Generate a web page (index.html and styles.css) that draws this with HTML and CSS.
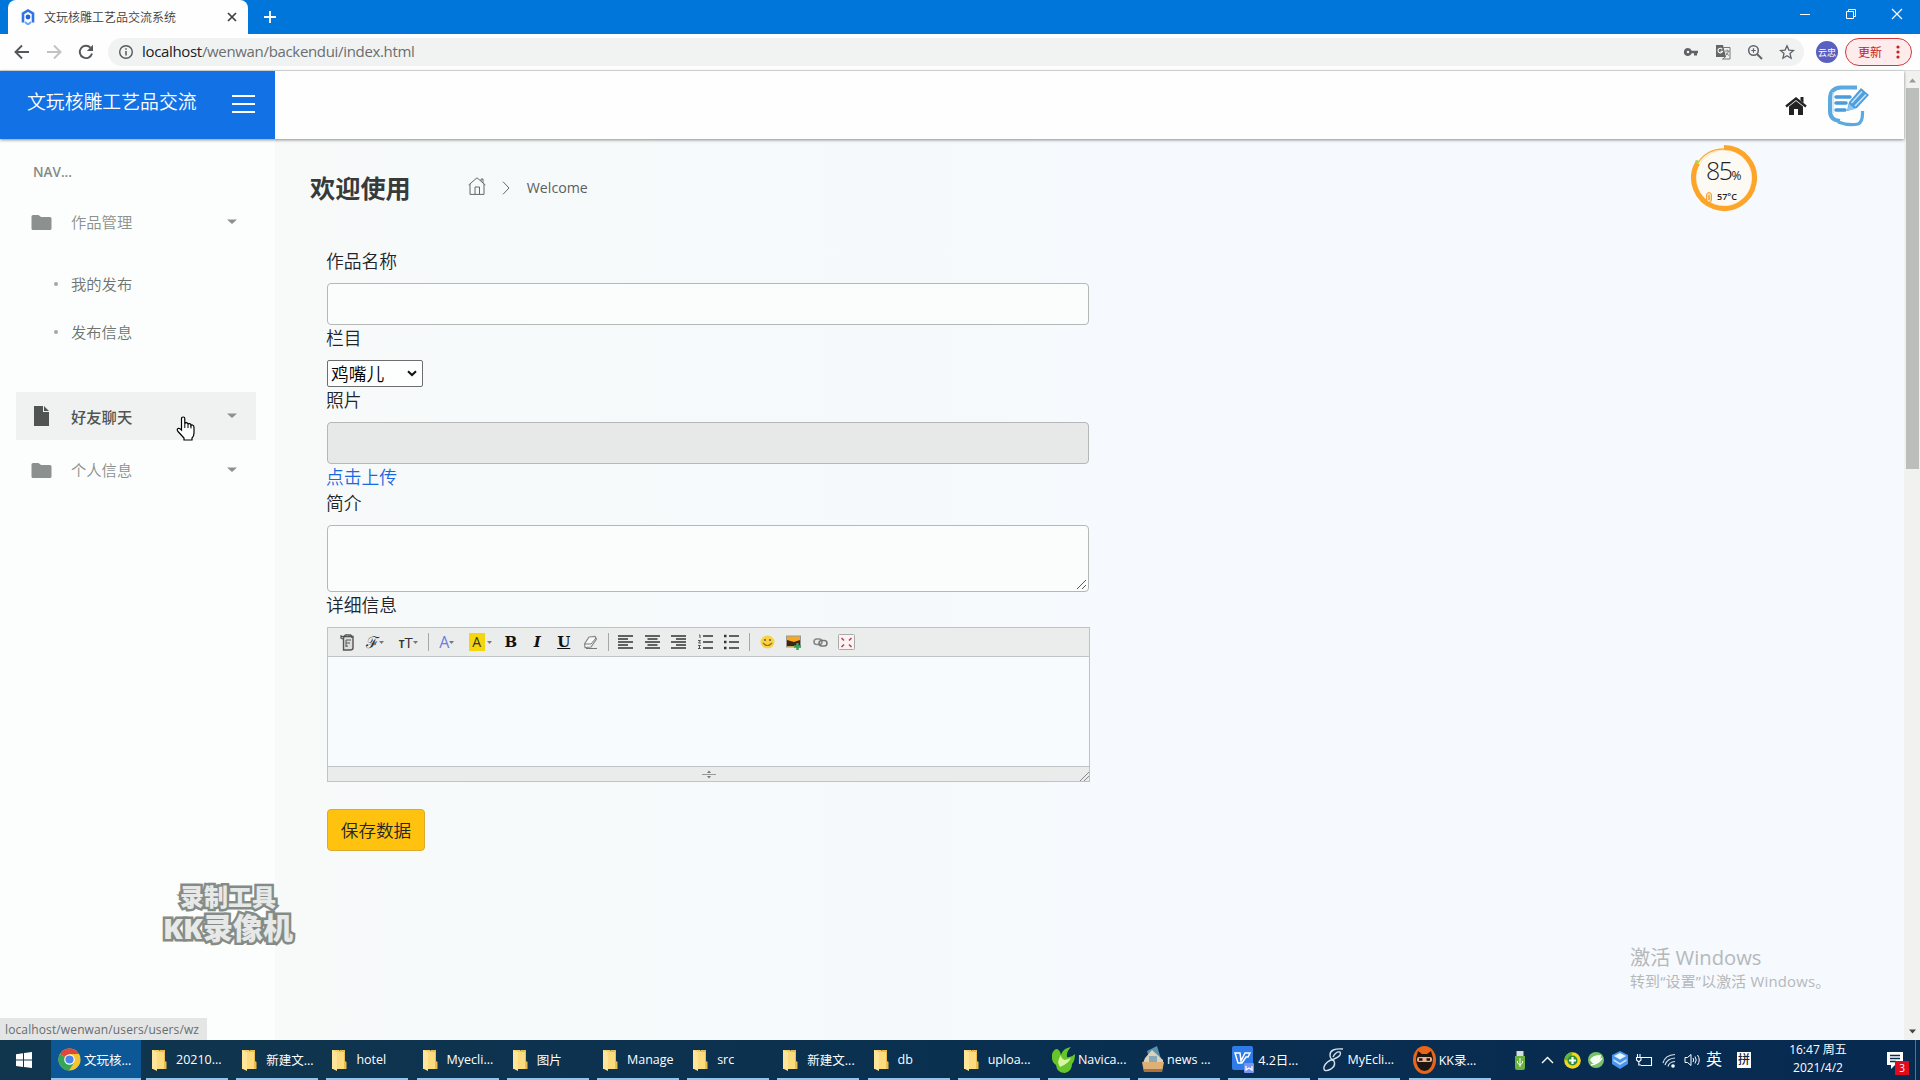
FILE: index.html
```html
<!DOCTYPE html>
<html lang="zh-CN">
<head>
<meta charset="utf-8">
<title>文玩核雕工艺品交流系统</title>
<link rel="stylesheet" href="styles.css">
</head>
<body>
<svg width="0" height="0" class="defs">
  <symbol id="folder" viewBox="0 0 20 15"><path d="M0 1.5Q0 0 1.5 0H7L9.5 2H18.5Q20 2 20 3.5V13.5Q20 15 18.5 15H1.5Q0 15 0 13.5Z" fill="currentColor"/></symbol>
  <symbol id="caret" viewBox="0 0 10 6"><path d="M0 .5H10L5 5Z" fill="currentColor"/></symbol>
  <symbol id="winfolder" viewBox="0 0 16 22"><path d="M1 1H8L9 2V20H1Z" fill="#f4cc61"/><path d="M9 1H14V12L15.500 13V20H8Z" fill="#e9bd4d"/><path d="M1 1L6 3V22L1 19.500Z" fill="#ffe59a"/><path d="M6 3H13V20H6Z" fill="#fbdb7d"/></symbol>
  <symbol id="dd" viewBox="0 0 5 3"><path d="M0 0H5L2.500 3Z" fill="#777"/></symbol>
</svg>

<header class="titlebar">
  <div class="tab">
    <svg class="favicon" width="16" height="16" viewBox="0 0 16 16"><path d="M3 13.500V4.500L8 1.500L13 4.500V13.500" fill="none" stroke="#2f74e8" stroke-width="2.600"/><circle cx="8" cy="8" r="2.400" fill="#2461dd"/><path d="M5 13L8 15.500L11 13" fill="none" stroke="#6aa2f5" stroke-width="2"/></svg>
    <span class="tab-title">文玩核雕工艺品交流系统</span>
    <svg class="tab-close" width="10" height="10" viewBox="0 0 10 10"><path d="M1 1L9 9M9 1L1 9" stroke="#3c4043" stroke-width="1.700"/></svg>
  </div>
  <svg class="newtab" width="12" height="12" viewBox="0 0 12 12"><path d="M6 0V12M0 6H12" stroke="#fff" stroke-width="1.800"/></svg>
  <div class="win-controls">
    <svg width="12" height="12" viewBox="0 0 12 12"><path d="M1 6.500H11" stroke="#fff"/></svg>
    <svg width="12" height="12" viewBox="0 0 12 12"><path d="M1.500 3.500H8.500V10.500H1.500ZM3.500 3V1.500H10.500V8.500H9" fill="none" stroke="#fff"/></svg>
    <svg width="12" height="12" viewBox="0 0 12 12"><path d="M1 1L11 11M11 1L1 11" stroke="#fff" stroke-width="1.200"/></svg>
  </div>
</header>

<div class="toolbar">
  <svg class="nav-ic" width="16" height="16" viewBox="0 0 16 16"><path d="M15 8H2M8 1.500L1.500 8L8 14.500" fill="none" stroke="#55585a" stroke-width="1.900"/></svg>
  <svg class="nav-ic" width="16" height="16" viewBox="0 0 16 16"><path d="M1 8H14M8 1.500L14.500 8L8 14.500" fill="none" stroke="#c0c2c3" stroke-width="1.900"/></svg>
  <svg class="nav-ic" width="16" height="16" viewBox="0 0 16 16"><path d="M14 9.500A6.200 6.200 0 1 1 12.500 3.600" fill="none" stroke="#55585a" stroke-width="1.900"/><path d="M15 .8V7H8.800Z" fill="#55585a"/></svg>
  <div class="omnibox">
    <svg width="16" height="16" viewBox="0 0 16 16"><circle cx="8" cy="8" r="6.300" fill="none" stroke="#55585a" stroke-width="1.400"/><path d="M8 7V11.500M8 4.200V5.700" stroke="#55585a" stroke-width="1.500"/></svg>
    <span class="url"><b>localhost</b>/wenwan/backendui/index.html</span>
    <div class="omni-icons">
      <svg width="16" height="16" viewBox="0 0 16 16"><path d="M5 4A4 4 0 1 0 8.700 9.300H11V11.500H14V9.300H15V6.700H8.700A4 4 0 0 0 5 4ZM5 6.700A1.300 1.300 0 1 1 5 9.300A1.300 1.300 0 1 1 5 6.700Z" fill="#5f6368" fill-rule="evenodd"/></svg>
      <svg width="16" height="16" viewBox="0 0 16 16"><path d="M1 1H8L11 13H1Z" fill="#666"/><path d="M8.500 3.500H15V15H7.500L10.500 13" fill="none" stroke="#777"/><path d="M7.300 5.400A2.300 2.300 0 1 0 7.500 7.300H5.500" fill="none" stroke="#fff" stroke-width="1.100"/><path d="M10 7H14.500M12.200 5.500V7M13.500 7Q13 10 10.500 11.500M11 8.500Q12 10.500 14 11.500" fill="none" stroke="#777" stroke-width=".9"/></svg>
      <svg width="16" height="16" viewBox="0 0 16 16"><circle cx="6.500" cy="6.500" r="4.800" fill="none" stroke="#5f6368" stroke-width="1.500"/><path d="M10 10L15 15" stroke="#5f6368" stroke-width="2"/><path d="M6.500 4.300V8.700M4.300 6.500H8.700" stroke="#5f6368" stroke-width="1.200"/></svg>
      <svg width="16" height="16" viewBox="0 0 16 16"><path d="M8 1.800L9.900 6.100L14.500 6.500L11 9.500L12.100 14.200L8 11.700L3.900 14.200L5 9.500L1.500 6.500L6.100 6.100Z" fill="none" stroke="#5f6368" stroke-width="1.300"/></svg>
    </div>
  </div>
  <span class="profile">云忠</span>
  <span class="update">更新<svg width="4" height="14" viewBox="0 0 4 14"><circle cx="2" cy="2" r="1.600"/><circle cx="2" cy="7" r="1.600"/><circle cx="2" cy="12" r="1.600"/></svg></span>
</div>

<div class="viewport">
  <div class="page">
    <div class="topbar">
      <div class="brand"><span>文玩核雕工艺品交流</span><i class="burger"><i></i><i></i><i></i></i></div>
      <div class="top-actions">
        <svg width="22" height="18" viewBox="0 0 22 18"><path d="M1 9.500L11 1.500L21 9.500" fill="none" stroke="#222" stroke-width="2.300"/><path d="M15.500 0H18.500V6L15.500 3.500Z" fill="#222"/><path d="M4 9.500L11 4L18 9.500V18H13V12H9V18H4Z" fill="#222"/></svg>
        <svg width="42" height="42" viewBox="0 0 42 42" fill="none"><path d="M30 2.500H14Q3 3 3 14V26Q3 35 13 36" stroke="#5aaae0" stroke-width="4"/><path d="M11 37Q22 41 31 39Q36 37 35.500 26" stroke="#5aaae0" stroke-width="3.200"/><path d="M6 7V28" stroke="#b7ddf6" stroke-width="1.200"/><path d="M9 12H23M9 18H19M9 25H18" stroke="#4a9bd9" stroke-width="3.500" stroke-linecap="round"/><path d="M22 17L34 3L42 10L30 23L20 26Z" fill="#4f9fdc"/><path d="M24.500 18L35 6.500M28 21L39 9.500" stroke="#c9e7fb" stroke-width="1.400"/><path d="M22 19L28 24L20.500 26Z" fill="#8cc7ef"/></svg>
      </div>
    </div>
    <div class="body">
      <nav class="sidebar">
        <p class="nav-title">NAV...</p>
        <a class="item"><svg width="21" height="15"><use href="#folder"/></svg><span>作品管理</span><svg class="caret" width="10" height="6"><use href="#caret"/></svg></a>
        <div class="sub"><a>我的发布</a><a>发布信息</a></div>
        <a class="item active"><svg width="21" height="20" viewBox="0 0 21 20"><path d="M3 0H12V6H18V20H3ZM13 0L18 5H13Z" fill="currentColor"/></svg><span>好友聊天</span><svg class="caret" width="10" height="6"><use href="#caret"/></svg></a>
        <a class="item"><svg width="21" height="15"><use href="#folder"/></svg><span>个人信息</span><svg class="caret" width="10" height="6"><use href="#caret"/></svg></a>
      </nav>
      <main>
        <div class="crumbs">
          <h1>欢迎使用</h1>
          <svg class="home" width="18" height="18" viewBox="0 0 18 18"><path d="M.7 8L9 .8L17.300 8M2 7V17.400H16V7M7 17V10H11.500V17M13 4V2H15V6" fill="none" stroke="#666"/></svg>
          <svg class="chev" width="8" height="14" viewBox="0 0 8 14"><path d="M1 .7L7 7L1 13.300" fill="none" stroke="#666"/></svg>
          <span>Welcome</span>
        </div>
        <form>
          <label>作品名称</label>
          <div class="field"></div>
          <label>栏目</label>
          <div class="select">鸡嘴儿<svg width="10" height="7" viewBox="0 0 10 7"><path d="M1 1.200L5 5L9 1.200" fill="none" stroke="#111" stroke-width="2"/></svg></div>
          <label>照片</label>
          <div class="field disabled"></div>
          <a class="upload">点击上传</a>
          <label>简介</label>
          <div class="field area"><svg width="9" height="9" viewBox="0 0 9 9"><path d="M0 9L9 0M5 9L9 5" stroke="#555"/></svg></div>
          <label>详细信息</label>
          <div class="editor">
            <div class="tools">
              <span class="t"><svg width="15" height="17" viewBox="0 0 15 17"><path d="M3.500 2.500H13V14Q13 16 10 16H3.500Z" fill="#ddd" stroke="#555" stroke-width="1.400"/><path d="M3 5L1 4V2L4 3Q5 0 8 1H10Q12 1 12 4" fill="none" stroke="#555" stroke-width="1.300"/><path d="M6 6H11M6 9H10M6 12H8M6 6V13" stroke="#555"/></svg></span>
              <span class="t script">ℱ<svg width="5" height="3"><use href="#dd"/></svg></span>
              <span class="t size"><small>T</small>T<svg width="5" height="3"><use href="#dd"/></svg></span>
              <i class="sep first"></i>
              <span class="t color">A<svg width="5" height="3"><use href="#dd"/></svg></span>
              <span class="t hilite"><em>A</em><svg width="5" height="3"><use href="#dd"/></svg></span>
              <span class="t serif">B</span>
              <span class="t serif ital">I</span>
              <span class="t serif under">U</span>
              <span class="t"><svg width="15" height="15" viewBox="0 0 15 15"><path d="M6 2L12 1.500L13.500 4L8 12L2 12.500L1.500 9Z" fill="#f8f8f8" stroke="#888" stroke-width="1.200"/><path d="M2 9H8L13 3M3 13.500H14" fill="none" stroke="#777"/></svg></span>
              <i class="sep"></i>
              <span class="t"><svg width="15" height="14" viewBox="0 0 15 14"><path d="M0 1H15M0 4H10M0 7H15M0 10H10M0 13H15" stroke="#333" stroke-width="1.500"/></svg></span>
              <span class="t"><svg width="15" height="14" viewBox="0 0 15 14"><path d="M0 1H15M2.500 4H12.500M0 7H15M2.500 10H12.500M0 13H15" stroke="#333" stroke-width="1.500"/></svg></span>
              <span class="t"><svg width="15" height="14" viewBox="0 0 15 14"><path d="M0 1H15M5 4H15M0 7H15M5 10H15M0 13H15" stroke="#333" stroke-width="1.500"/></svg></span>
              <span class="t"><svg width="15" height="16" viewBox="0 0 15 16"><path d="M5 2H15M5 8H15M5 14H15" stroke="#333" stroke-width="1.500"/><path d="M1 1H2V4M0 6.500H2.500L.5 9H3M0 11.500H2.500L1 13L2.500 14.500H0" fill="none" stroke="#555"/></svg></span>
              <span class="t"><svg width="15" height="16" viewBox="0 0 15 16"><path d="M5 2H15M5 8H15M5 14H15" stroke="#333" stroke-width="1.500"/><path d="M0 2H2.500M0 8H2.500M0 14H2.500" stroke="#333" stroke-width="2.500"/></svg></span>
              <i class="sep"></i>
              <span class="t"><svg width="15" height="14" viewBox="0 0 15 14"><ellipse cx="7.500" cy="7" rx="7" ry="6.500" fill="#f7d344"/><circle cx="5" cy="5" r="1" fill="#654"/><circle cx="10" cy="5" r="1" fill="#654"/><path d="M3 8Q7.500 13 12 8" fill="none" stroke="#a66b17" stroke-width="1.200"/></svg></span>
              <span class="t"><svg width="15" height="15" viewBox="0 0 15 15"><rect x=".5" y="1" width="14" height="11" fill="#f7a721" stroke="#999"/><path d="M1 5L8 7L14 5V11H1Z" fill="#3a2712"/><path d="M11.500 8V15M8 11.500H15" stroke="#3ba05a" stroke-width="2.500"/></svg></span>
              <span class="t"><svg width="15" height="9" viewBox="0 0 15 9"><rect x="1" y="1" width="8" height="5.500" rx="2.700" fill="none" stroke="#888" stroke-width="1.600"/><rect x="6" y="2.500" width="8" height="5.500" rx="2.700" fill="none" stroke="#777" stroke-width="1.600"/></svg></span>
              <span class="t"><svg width="17" height="16" viewBox="0 0 17 16"><rect x=".5" y=".5" width="16" height="15" rx="1" fill="#f8f4f4" stroke="#aaa"/><path d="M3.500 4L6 6.500M13.500 4L11 6.500M3.500 13L6 10.500M13.500 13L11 10.500" stroke="#cf3950" stroke-width="1.600"/></svg></span>
            </div>
            <div class="canvas"></div>
            <div class="grip"><svg width="14" height="9" viewBox="0 0 14 9"><path d="M0 4.500H14" stroke="#999"/><path d="M5 3L7 .5L9 3ZM5 6L7 8.500L9 6Z" fill="#777"/></svg><svg class="corner" width="9" height="9" viewBox="0 0 9 9"><path d="M0 9L9 0M4 9L9 4" stroke="#888"/></svg></div>
          </div>
          <button type="button">保存数据</button>
        </form>
      </main>
    </div>
  </div>
  <div class="scrollbar"><svg width="7" height="5" viewBox="0 0 7 5"><path d="M0 4.500H7L3.500 .5Z" fill="#999"/></svg><i></i><svg width="7" height="5" viewBox="0 0 7 5"><path d="M0 .5H7L3.500 4.500Z" fill="#444"/></svg></div>
</div>

<footer class="taskbar">
  <div class="start"><svg width="16" height="16" viewBox="0 0 16 16"><path d="M0 2.200L7 1.200V7.600H0ZM8 1.100L16 0V7.600H8ZM0 8.500H7V14.900L0 13.900ZM8 8.500H16V16L8 15Z" fill="#fff"/></svg></div>
  <div class="task current"><svg width="23" height="23" viewBox="0 0 24 24"><circle cx="12" cy="12" r="11.500" fill="#f6c530"/><path d="M12 12L2 6.200A11.500 11.500 0 0 1 22 6.300H12Z" fill="#e2453a"/><path d="M12 12L2 6.200A11.500 11.500 0 0 0 11.500 23.500L16.800 15Z" fill="#36a556"/><circle cx="12" cy="12" r="5.500" fill="#fff"/><circle cx="12" cy="12" r="4.300" fill="#4a85ee"/></svg><span>文玩核...</span></div>
  <div class="task"><svg width="16" height="22"><use href="#winfolder"/></svg><span>20210...</span></div>
  <div class="task"><svg width="16" height="22"><use href="#winfolder"/></svg><span>新建文...</span></div>
  <div class="task"><svg width="16" height="22"><use href="#winfolder"/></svg><span>hotel</span></div>
  <div class="task"><svg width="16" height="22"><use href="#winfolder"/></svg><span>Myecli...</span></div>
  <div class="task"><svg width="16" height="22"><use href="#winfolder"/></svg><span>图片</span></div>
  <div class="task"><svg width="16" height="22"><use href="#winfolder"/></svg><span>Manage</span></div>
  <div class="task"><svg width="16" height="22"><use href="#winfolder"/></svg><span>src</span></div>
  <div class="task"><svg width="16" height="22"><use href="#winfolder"/></svg><span>新建文...</span></div>
  <div class="task"><svg width="16" height="22"><use href="#winfolder"/></svg><span>db</span></div>
  <div class="task"><svg width="16" height="22"><use href="#winfolder"/></svg><span>uploa...</span></div>
  <div class="task app"><svg width="23" height="26" viewBox="0 0 23 26"><path d="M0 7Q2 2 5 2Q8 3 9 8Q11 1 19 0Q14 5 15 10Q19 11 23 7Q23 14 20 17Q20 24 13 26Q5 26 4 18Q-1 15 0 7Z" fill="#67c52c"/><path d="M9 8Q4 15 8 20Q16 17 19 11L13 13Q9 12 9 8Z" fill="#d8f6a0"/></svg><span>Navica...</span></div>
  <div class="task app"><svg width="22" height="27" viewBox="0 0 22 27"><path d="M5 5L15 0L19 13L8 16Z" fill="#5d8fae"/><path d="M3 12L10 4L21 14V17H1Z" fill="#d9d3bc"/><path d="M7 10H15V16H7Z" fill="#87a9b8"/><path d="M0 16H22L20 26H2Z" fill="#dfb075"/><path d="M2 23H20V26H2Z" fill="#a8713e"/></svg><span>news ...</span></div>
  <div class="task app"><svg width="23" height="27" viewBox="0 0 23 27"><rect width="21" height="24" rx="2" fill="#2f7be8"/><path d="M3 7H8L9 15L13 7H18L16 11H14L10 17H6Z" fill="none" stroke="#fff" stroke-width="1.500"/><rect x="12" y="17" width="10" height="10" rx="1" fill="#7695f0"/><path d="M14 20V24L17 22L20 24V20" fill="none" stroke="#fff" stroke-width="1.300"/></svg><span>4.2日...</span></div>
  <div class="task app"><svg width="22" height="24" viewBox="0 0 22 24"><path d="M21 1Q8 0 8 7Q8 11 12 13Q14 18 9 21Q1 25 2 19Q4 13 12 11Q20 8 18 4Q14 3 11 9" fill="none" stroke="#d4e2ee" stroke-width="1.400"/></svg><span>MyEcli...</span></div>
  <div class="task app"><svg width="23" height="28" viewBox="0 0 23 28"><ellipse cx="11.500" cy="14" rx="11.500" ry="14" fill="#e8661b"/><path d="M3 12L5 5L9 8H14L18 5L20 12Q20 24 11.500 25Q3 24 3 12Z" fill="#1d1714"/><rect x="4" y="11" width="15" height="5" rx="2" fill="#f6b088"/><path d="M6 13.500H9.500M13.500 13.500H17" stroke="#211" stroke-width="2.500"/></svg><span>KK录...</span></div>
  <div class="tray">
    <span class="s28"><svg width="10" height="19" viewBox="0 0 10 19"><rect x="1.500" width="7" height="5" fill="#d8dedb"/><path d="M0 5H10V17Q10 19 8 19H2Q0 19 0 17Z" fill="#68b33e"/><path d="M5 7V16M2.500 10V12L5 14L7.500 12V10" fill="none" stroke="#fff"/></svg></span>
    <span class="s26"><svg width="13" height="8" viewBox="0 0 13 8"><path d="M1 7L6.500 1.500L12 7" fill="none" stroke="#fff" stroke-width="1.400"/></svg></span>
    <span><svg width="17" height="17" viewBox="0 0 17 17"><circle cx="8.500" cy="8.500" r="8.300" fill="#f4d51f"/><path d="M.2 8.500A8.300 8.300 0 0 1 8.500 .2L6 8Z" fill="#64b635"/><circle cx="8.500" cy="8.500" r="5" fill="#318c36"/><path d="M8.500 5V12M5 8.500H12" stroke="#fff" stroke-width="2.200"/></svg></span>
    <span><svg width="16" height="16" viewBox="0 0 16 16"><circle cx="8" cy="8" r="8" fill="#79c16b"/><path d="M2 8Q4 3 13 3Q13 11 6 12Q4 11 2 8Z" fill="#f5fff0"/><path d="M3 13Q11 12 14 6" fill="none" stroke="#fff" stroke-width="1.300"/></svg></span>
    <span><svg width="16" height="18" viewBox="0 0 16 18"><path d="M8 0L16 4V13L8 18L0 13V4Z" fill="#4a94ec"/><path d="M8 2L14 5L8 8.500L2 5Z" fill="#e8f5ff"/><path d="M1.500 8L8 12L14.500 8V10L8 14L1.500 10Z" fill="#bfdfff"/></svg></span>
    <span><svg width="18" height="14" viewBox="0 0 18 14"><path d="M6 4.500H16.500V12.500H6M1.500 4.500H6V7L3.800 9L1.500 7ZM2.500 4V1M5 4V1M3.800 9V12H6" fill="none" stroke="#fff" stroke-width="1.100"/></svg></span>
    <span class="s26"><svg width="14" height="15" viewBox="0 0 14 15"><path d="M1 10Q3 2 13 1.500M3 12Q5 5.500 13 5M6 13.500Q7 9 13 8.500" fill="none" stroke="#d7dfe8" stroke-width="1.200"/><circle cx="11" cy="13" r="1.800" fill="#fff"/></svg></span>
    <span class="s20"><svg width="17" height="14" viewBox="0 0 17 14"><path d="M1 4.500H3.500L7 1.500V12.500L3.500 9.500H1Z" fill="none" stroke="#fff"/><path d="M9 5Q10.500 7 9 9M11 3.500Q13.500 7 11 10.500M13.500 2Q17 7 13.500 12" fill="none" stroke="#fff"/></svg></span>
    <span class="ime">英</span>
    <span class="s36"><em class="pin">拼</em></span>
    <div class="clock"><div>16:47 周五</div><div>2021/4/2</div></div>
    <div class="notice"><svg width="16" height="18" viewBox="0 0 16 18"><path d="M0 0H16V13H8L4 17V13H0Z" fill="#fff"/><path d="M3 3.500H13M3 6.500H13M3 9.500H9" stroke="#0b2c50" stroke-width="1.300"/></svg><b>3</b></div>
  </div>
</footer>

<div class="gadget">
  <svg width="70" height="70" viewBox="0 0 70 70"><circle cx="35" cy="35" r="31" fill="#fcfaf3"/><circle cx="35" cy="35" r="28" fill="none" stroke="#fbe3bd" stroke-width="1"/><path d="M35 4.500A30.500 30.500 0 1 1 8.500 20" fill="none" stroke="#fda529" stroke-width="5"/><path d="M9 20A29 29 0 0 1 35 6" fill="none" stroke="#f6b045" stroke-width="1.300"/><circle cx="8" cy="19" r="2" fill="#b9d14a"/></svg>
  <div class="reading"><div class="load">85<small>%</small></div><div class="temp"><svg width="6" height="11" viewBox="0 0 6 11"><rect x=".6" y=".6" width="4.800" height="9.800" rx="2.400" fill="#ffe2ae" stroke="#f29a22"/><path d="M3 3V8" stroke="#f29a22" stroke-width="1.300"/></svg>57°C</div></div>
</div>
<div class="activate"><div>激活 Windows</div><p>转到“设置”以激活 Windows。</p></div>
<div class="recorder"><div>录制工具</div><p><span>KK</span>录像机</p></div>
<div class="status">localhost/wenwan/users/users/wz</div>
<svg class="pointer" width="19" height="25" viewBox="0 0 19 25"><path d="M5.500 14V2.800Q5.500 1 7.200 1Q8.800 1 8.800 2.800V8Q9 6.500 10.500 6.700Q12 7 12 8.500Q12.500 7.300 13.700 7.700Q15 8 15 9.500Q15.500 8.700 16.500 9Q18 9.500 18 11.500V17Q18 20 16 22V24H8V22L2 15.500Q.5 13.500 2 12.500Q3.500 12 5.500 14Z" fill="#fff" stroke="#000" stroke-width="1.200"/><path d="M8.800 8V12M12 8.500V12M15 9.500V12.500" stroke="#000"/></svg>
</body>
</html>
```
FILE: styles.css
```css
* { box-sizing: border-box; }
body { margin: 0; height: 1080px; overflow: hidden; display: flex; flex-direction: column; position: relative; font-family: "Open Sans", "Noto Sans CJK SC", sans-serif; font-size: 14px; color: #222; background: #f6f9fd; }
svg { display: block; flex: none; }
.defs { position: absolute; }
p, h1 { margin: 0; }
i, em { font-style: normal; }

.titlebar { height: 34px; flex: none; display: flex; background: #0076da; padding-left: 8px; }
.tab { width: 240px; height: 34px; background: #fdfefd; border-radius: 8px 8px 0 0; display: flex; align-items: center; padding: 0 11px 0 12px; }
.tab-title { font-size: 12px; margin-left: 8px; color: #3c4043; font-weight: 350; white-space: nowrap; }
.tab-close { margin-left: auto; }
.newtab { margin: 11px 0 0 16px; }
.win-controls { margin-left: auto; display: flex; gap: 34px; padding: 8px 17px 0 0; }

.toolbar { height: 37px; flex: none; background: #fdfefd; border-bottom: 1px solid #dcdedd; display: flex; align-items: center; padding: 0 8px 0 14px; }
.nav-ic { margin-right: 16px; }
.omnibox { flex: 1; height: 28px; border-radius: 14px; background: #f1f3f3; display: flex; align-items: center; padding: 0 9px 0 10px; margin-left: -2px; }
.url { margin-left: 8px; padding-bottom: 2px; font-size: 15px; letter-spacing: -.33px; color: #6b6e70; white-space: nowrap; }
.url b { font-weight: 400; color: #202124; }
.omni-icons { margin-left: auto; display: flex; gap: 16px; }
.profile { width: 22px; height: 22px; border-radius: 50%; background: #5a5fc0; color: #fff; font-size: 9px; display: flex; align-items: center; justify-content: center; white-space: nowrap; margin: 0 7px 0 12px; }
.update { width: 67px; height: 28px; border: 1px solid #d2373c; border-radius: 14px; background: #fdeceb; color: #c5221f; font-size: 12px; display: flex; align-items: center; justify-content: space-between; padding: 0 11px 0 12px; }
.update svg { fill: #c5221f; }

.viewport { flex: 1; min-height: 0; display: flex; }
.page { flex: 1; display: flex; flex-direction: column; }
.topbar { height: 68px; flex: none; display: flex; background: #fefefe; box-shadow: 0 1px 3px rgba(0,0,0,.45); position: relative; }
.brand { width: 275px; background: #1371e6; color: #fff; display: flex; align-items: center; justify-content: space-between; padding: 0 20px 4px 27px; font-size: 18.850px; font-weight: 350; white-space: nowrap; }
.brand span { padding-bottom: 4px; }
.burger { width: 23px; display: flex; flex-direction: column; gap: 6px; margin-top: 1px; }
.burger i { height: 2px; background: #fff; }
.top-actions { margin-left: auto; display: flex; align-items: center; gap: 20px; padding: 1px 35px 0 0; }
.body { flex: 1; display: flex; }

.sidebar { width: 275px; background: #fbfefc; padding: 22px 19px 0 16px; color: #8c908e; }
.nav-title { font: 600 13.500px/22px "Open Sans", sans-serif; padding-left: 17px; margin-bottom: 15px; color: #858a87; }
.item { height: 48px; display: flex; align-items: center; padding: 0 19px 0 15px; font-size: 15.300px; margin-bottom: 6px; font-weight: 350; }
.item span { margin-left: 19px; padding-bottom: 2px; }
.item .caret { margin-left: auto; }
.item.active { background: #f0f2f1; color: #505452; font-weight: 500; }
.item.active span { padding-bottom: 0; }
.item.active .caret { color: #8c908e; }
.sub { padding: 7px 0 30px 55px; font-size: 15.300px; font-weight: 350; color: #6f7472; height: 140px; }
.sub a { height: 48px; display: flex; align-items: center; }
.sub a::before { content: ""; width: 4px; height: 4px; border-radius: 50%; background: #a3a7a5; margin: 1px 13px 0 -17px; }

main { flex: 1; background: linear-gradient(90deg, #f7faf9 0, #f6f9fd 50%); }
.crumbs { height: 98px; display: flex; align-items: center; padding: 0 0 1px 35px; }
h1 { font-size: 25.200px; line-height: 30px; font-weight: 700; color: #383a3a; }
.home { margin-left: 57px; margin-top: -3px; }
.chev { margin-left: 16px; }
.crumbs span { margin-left: 17px; font: 14.200px "Open Sans", sans-serif; color: #5b5e5e; }
form { width: 815px; padding: 11px 0 0 52px; font-size: 17.800px; font-weight: 350; color: #212529; }
label, .upload { display: block; height: 26px; line-height: 26px; margin-left: -1px; }
label { margin-bottom: 9px; }
.upload { color: #1a68e0; }
.field { width: 762px; height: 42px; border: 1px solid #b4b8b6; border-radius: 4px; background: #fbfdfd; }
.field.disabled { background: #e7e9e9; }
.field.area { height: 67px; display: flex; justify-content: flex-end; align-items: flex-end; padding: 2px; }
.select { width: 96px; height: 27px; line-height: 24px; border: 1px solid #6d6f6f; border-radius: 2px; background: #fdfefe; color: #000; display: flex; align-items: center; justify-content: space-between; padding: 0 5px 0 3px; }
.editor { width: 763px; height: 155px; border: 1px solid #bfc3c1; display: flex; flex-direction: column; }
.tools { height: 29px; flex: none; border-bottom: 1px solid #bfc3c1; background: #ebedec; display: flex; align-items: center; padding-left: 6px; }
.t { width: 26.500px; height: 20px; display: flex; align-items: center; justify-content: center; font-size: 14px; font-weight: 400; color: #333; flex: none; }
.t > svg + svg, .t em + svg { margin-left: 2px; }
.script { font-family: "DejaVu Serif", serif; margin-left: 1px; font-size: 16px; }
.size { margin-left: 7px; font-size: 15px; }
.size small { font-size: 10px; margin-top: 3px; font-weight: 700; }
.sep { width: 1px; height: 18px; background: #a5a8a7; margin: 0 4px; }
.sep.first { margin: 0 6px; }
.color { color: #6b7ddd; font-size: 16px; margin-left: -1px; }
.hilite { margin: 0 4px 0 7px; }
.hilite em { width: 16px; height: 18px; line-height: 18px; background: #f5d60d; text-align: center; }
.serif { font: 700 15px "DejaVu Serif", serif; color: #111; }
.ital { font-style: italic; }
.under { text-decoration: underline; }
.canvas { flex: 1; background: #f8fbfd; }
.grip { height: 15px; flex: none; border-top: 1px solid #bfc3c1; background: #e9eceb; display: flex; justify-content: center; align-items: center; position: relative; }
.corner { position: absolute; right: 0; bottom: 0; }
button { display: block; margin-top: 27px; width: 98px; height: 42px; padding: 0 0 2px; border: 1px solid #d9ab2e; border-radius: 4px; background: #ffc20e; font: 350 17.600px "Open Sans", "Noto Sans CJK SC", sans-serif; color: #212529; }

.scrollbar { width: 16px; background: #f1f1ef; display: flex; flex-direction: column; align-items: center; padding: 7px 0 6px; }
.scrollbar i { width: 13px; height: 381px; background: #bcbebc; margin: 5px 0 auto; }

.taskbar { height: 40px; flex: none; display: flex; background: linear-gradient(90deg, #10364e, #0a3050 50%, #072a50); color: #fff; font-size: 12.500px; }
.start { width: 51px; display: flex; align-items: center; padding-left: 16px; }
.task { width: 82px; margin-right: 8.200px; flex: none; border-bottom: 2px solid #91c5ee; display: flex; align-items: center; padding: 1px 0 0 5px; white-space: nowrap; }
.task svg { margin-right: 3px; }
.task svg[width="16"] { margin-right: 9px; }
.task.app { padding-left: 4px; }
.task.current { width: 90px; margin-right: 5px; background: #0c5796; padding-left: 7px; }
.tray { margin-left: auto; display: flex; align-items: center; width: 414px; }
.tray > span { width: 24px; flex: none; display: flex; justify-content: center; }
.tray > .s28 { width: 28px; }
.tray > .s26 { width: 26px; }
.tray > .s20 { width: 20px; }
.tray > .s36 { width: 36px; }
.ime { font-size: 16px; line-height: 20px; padding-bottom: 2px; }
.pin { width: 14px; height: 16px; background: #fff; color: #10253e; font-size: 12px; line-height: 16px; font-weight: 500; text-align: center; }
.clock { width: 112px; text-align: center; line-height: 18px; font-size: 12px; padding-bottom: 2px; }
.notice { flex: 1; height: 40px; padding: 12px 0 0 13px; position: relative; border-right: 1px solid #5c7188; margin-right: 4px; }
.notice b { position: absolute; left: 21px; top: 21px; width: 14px; height: 14px; background: #e00b1c; font: 10px/14px "Open Sans", sans-serif; text-align: center; }

.gadget { position: absolute; left: 1689px; top: 143px; }
.reading { position: absolute; inset: 0; text-align: center; }
.load { font: 300 25px/24px "Open Sans", sans-serif; margin-top: 15px; margin-right: 2px; letter-spacing: -1.500px; }
.load small { font-size: 12px; font-weight: 400; }
.temp { display: flex; gap: 5px; justify-content: center; align-items: center; font: 600 9px/14px "Open Sans", sans-serif; margin-right: 5px; margin-top: 2px; }
.activate { position: absolute; left: 1630px; top: 943px; color: #b4b8bb; font-size: 20.200px; font-weight: 400; line-height: 28px; white-space: nowrap; }
.activate p { font-size: 14.900px; line-height: 20px; letter-spacing: .2px; }
.recorder { position: absolute; left: 157px; top: 882px; width: 142px; text-align: center; color: #e6e9e7; font-weight: 900; font-size: 24px; line-height: 29px; white-space: nowrap; -webkit-text-stroke: 5px #858c87; paint-order: stroke fill; }
.recorder p { font-size: 30px; line-height: 34px; }
.recorder span { font-size: 29px; }
.status { position: absolute; left: 0; top: 1018px; width: 207px; height: 22px; background: #e4e6e6; color: #686c6e; font-size: 12px; line-height: 24px; letter-spacing: .12px; padding-left: 5px; white-space: nowrap; }
.pointer { position: absolute; left: 176px; top: 416px; }
```
